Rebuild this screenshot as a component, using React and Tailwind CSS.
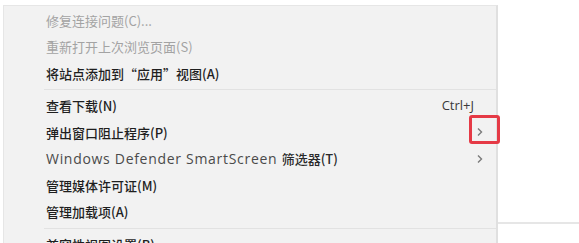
import React from "react";

const cjk = '"Microsoft YaHei", "Noto Sans CJK SC", "Noto Sans", sans-serif';

function Row({ children, disabled, right, className = "" }) {
  return (
    <div
      className={`flex items-center h-[26.5px] pl-[42px] pr-[12px] text-[13px] ${
        disabled ? "text-[#a3a3a3]" : "text-[#1f1f1f] font-medium"
      } ${className}`}
    >
      <span className="flex-1 whitespace-nowrap">{children}</span>
      {right}
    </div>
  );
}

function Sep() {
  return (
    <div className="h-[6px] flex items-center pl-[40px]">
      <div className="h-[1px] w-full bg-[#e2e2e2]" />
    </div>
  );
}

function Chevron() {
  return (
    <svg width="8" height="10" viewBox="0 0 8 10">
      <path d="M2 1.5 L5.5 5 L2 8.5" fill="none" stroke="#7a7a7a" strokeWidth="1.4" />
    </svg>
  );
}

export default function App() {
  return (
    <div className="w-[579px] h-[243px] overflow-hidden bg-white flex" style={{ fontFamily: cjk }}>
      <div className="ml-[3px] mt-[5px] w-[495px] h-[260px] bg-[#f2f2f2] border-l border-t border-[#e6e6e6] border-r-2 border-r-[#e0e0e0] relative pt-[1px]">
        <Row disabled>修复连接问题(C)...</Row>
        <Row disabled>重新打开上次浏览页面(S)</Row>
        <Row>将站点添加到“应用”视图(A)</Row>
        <Sep />
        <Row
          right={
            <span
              className="text-[13px] font-normal text-[#3a3a3a] mr-[10px]"
              style={{ fontFamily: '"Open Sans", "Noto Sans", sans-serif' }}
            >
              Ctrl+J
            </span>
          }
        >
          查看下载(N)
        </Row>
        <Row right={<Chevron />}>弹出窗口阻止程序(P)</Row>
        <Row right={<Chevron />}>
          <span
            className="text-[14px] font-normal text-[#4a4a4a] tracking-[0.7px]"
            style={{ fontFamily: '"Open Sans", "Noto Sans", sans-serif' }}
          >
            Windows Defender SmartScreen{" "}
          </span>
          <span className="text-[#2a2a2a]">筛选器(T)</span>
        </Row>
        <Row>管理媒体许可证(M)</Row>
        <Row>管理加载项(A)</Row>
        <Sep />
        <Row>兼容性视图设置(B)</Row>
        <div className="absolute left-[465px] top-[109px] w-[31px] h-[29px] border-[3px] border-[#e53a46] rounded-[3px]" />
      </div>
      <div className="flex-1 flex flex-col">
        <div className="h-[222px]" />
        <div className="h-[2px] bg-[#e6e6e6]" />
      </div>
    </div>
  );
}
